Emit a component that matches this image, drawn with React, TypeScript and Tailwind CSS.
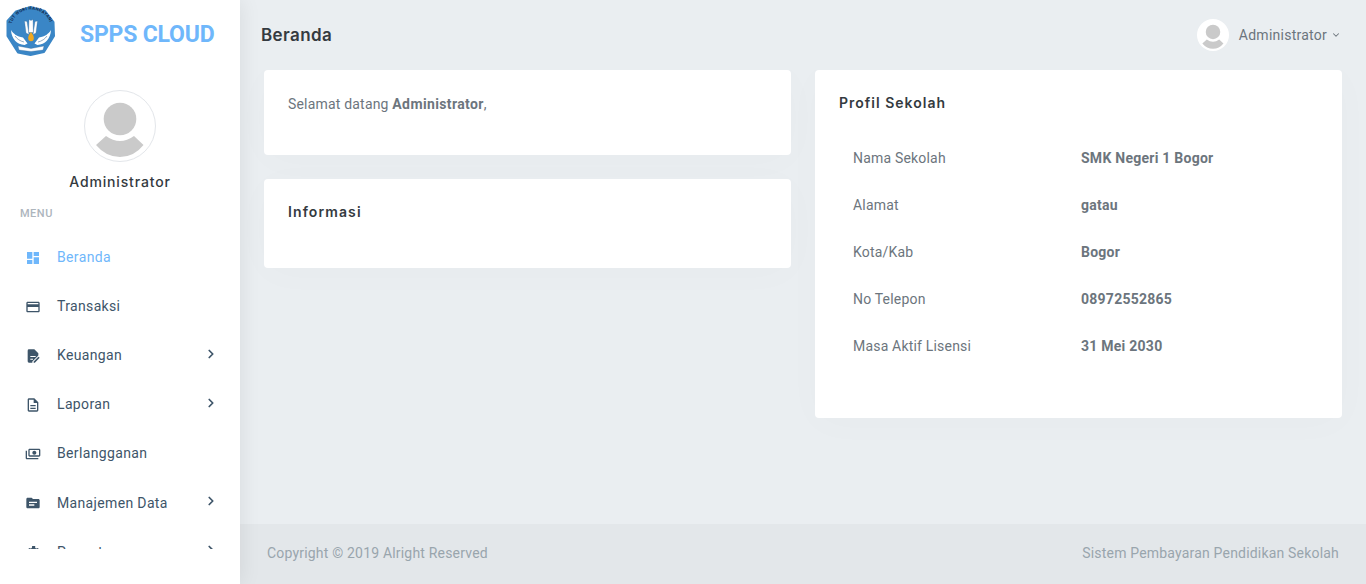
import { ChevronDown, ChevronRight } from "lucide-react";

const menuItems = [
  { label: "Beranda", icon: "M3 3h8v10H3zM3 15h8v6H3zM13 3h8v6h-8zM13 11h8v10h-8z", active: true },
  {
    label: "Transaksi",
    icon: "M20 4H4c-1.11 0-1.99.89-1.99 2L2 18c0 1.11.89 2 2 2h16c1.11 0 2-.89 2-2V6c0-1.11-.89-2-2-2zm0 14H4v-6h16v6zm0-10H4V6h16v2z",
  },
  {
    label: "Keuangan",
    icon: "M6 2h8l6 6v3.200l-9 9V22H6a2 2 0 0 1-2-2V4a2 2 0 0 1 2-2zM8 12h8v1.500H8zM8 16h4v1.500H8zM13 20.200V22h1.800l7.200-7.200-1.800-1.800z",
    more: true,
  },
  {
    label: "Laporan",
    icon: "M8 16h8v2H8zm0-4h8v2H8zm6-10H6c-1.100 0-2 .9-2 2v16c0 1.100.89 2 1.990 2H18c1.100 0 2-.9 2-2V8l-6-6zm4 18H6V4h7v5h5v11z",
    more: true,
  },
  {
    label: "Berlangganan",
    icon: "M5 14V6c0-1.100.9-2 2-2h14c1.100 0 2 .9 2 2v8c0 1.100-.9 2-2 2H7c-1.100 0-2-.9-2-2zm2 0h14V6H7v8zm7-7c1.660 0 3 1.340 3 3s-1.340 3-3 3-3-1.340-3-3 1.340-3 3-3zM1 7v11c0 1.100.9 2 2 2h17v-2H3V7H1z",
  },
  {
    label: "Manajemen Data",
    icon: "M20 6h-8l-2-2H4c-1.100 0-1.990.9-1.990 2L2 18c0 1.100.9 2 2 2h16c1.100 0 2-.9 2-2V8c0-1.100-.9-2-2-2zm-6 10H6v-2h8v2zm4-4H6v-2h12v2z",
    more: true,
  },
  {
    label: "Pengaturan",
    icon: "M19.400 13a7.500 7.500 0 0 0 0-2l2.100-1.600-2-3.500-2.500 1a7.300 7.300 0 0 0-1.700-1L15.300 3h-4.600l-.4 2.900a7.300 7.300 0 0 0-1.700 1l-2.500-1-2 3.500L6.200 11a7.500 7.500 0 0 0 0 2l-2.100 1.600 2 3.500 2.500-1a7.300 7.300 0 0 0 1.700 1l.4 2.900h4.600l.4-2.900a7.300 7.300 0 0 0 1.700-1l2.500 1 2-3.500zM13 15.500a3.500 3.500 0 1 1 0-7 3.500 3.500 0 0 1 0 7z",
    more: true,
  },
];

const schoolProfile = [
  ["Nama Sekolah", "SMK Negeri 1 Bogor"],
  ["Alamat", "gatau"],
  ["Kota/Kab", "Bogor"],
  ["No Telepon", "08972552865"],
  ["Masa Aktif Lisensi", "31 Mei 2030"],
];

const UserShape = ({ className }: { className: string }) => (
  <svg viewBox="0 0 72 72" className={className}>
    <circle cx="36" cy="29" r="16.300" fill="#cacaca" />
    <path d="M12 55 L22 46 Q36 56 50 46 L59.500 55 Q50 67 36 67 Q22 67 12 55z" fill="#cacaca" />
  </svg>
);

const Logo = () => (
  <svg viewBox="0 0 50 50" className="h-[50px] w-[50px]">
    <path
      d="M24.500 1 39 5 47.500 16 48 30 38 46 24.500 49 12 46.500 1.500 30 1.500 15 10 5.500z"
      fill="#3a86c6"
      stroke="#3a86c6"
      strokeWidth="2"
      strokeLinejoin="round"
    />
    <path id="logo-ring" d="M5 21C6 11 15 3.500 25 3.500S44 11 45 21" fill="none" />
    <text fontFamily="Roboto, sans-serif" fontSize="4.300" fontWeight="700" fill="#10294d" letterSpacing="0.300">
      <textPath href="#logo-ring" startOffset="3">TUT WURI HANDAYANI</textPath>
    </text>
    <path d="M18.500 15l2.500.5 2 13-3-1.500zM31.500 15l-2.500.5-2 13 3-1.500zM23 13.500l2 1 2-1 .4 13h-4.800z" fill="#ffffff" stroke="#2a5c8f" strokeWidth="0.300" />
    <path d="M5 24c2.500 4 6 6.500 12 7.500l4.500 6-3 1.500C11 38.500 5.500 33 5 24zM45 24c-2.500 4-6 6.500-12 7.500L28.500 37.500l3 1.500C39 38.500 44.500 33 45 24z" fill="#ffffff" />
    <path d="M9 30c2 3 5 5 9 6M41 30c-2 3-5 5-9 6" fill="none" stroke="#2a5c8f" strokeWidth="0.500" />
    <path d="M25 26c2.300 2.800 2.800 4.500 2.800 6a2.800 3.200 0 0 1-5.600 0c0-1.500.5-3.200 2.800-6z" fill="#f2a81e" />
    <path d="M12 40 25 42.500 38 40 37 44 25 45.500 13 44z" fill="#ffffff" stroke="#2a5c8f" strokeWidth="0.300" />
  </svg>
);

export default function App() {
  return (
    <div className="flex h-[584px] w-[1366px] overflow-hidden bg-[#eaeef1] font-['Roboto',sans-serif] text-[14px] tracking-[0.19px] text-[#6c757d]">
      <aside className="relative z-10 flex h-full w-[240px] shrink-0 flex-col bg-white shadow-[1px_0_20px_rgba(0,0,0,0.08)]">
        <div className="flex h-[70px] shrink-0 items-start pl-[6px] pt-[6px]">
          <Logo />
          <span className="ml-[24px] mt-[15px] text-[23px] leading-[28px] font-bold tracking-[-0.2px] text-[#6fb7fb]">
            SPPS CLOUD
          </span>
        </div>

        <div className="flex shrink-0 flex-col items-center pt-[20px]">
          <div className="h-[72px] w-[72px] rounded-full border border-[#e3e6ea] bg-white">
            <UserShape className="-m-px h-[72px] w-[72px]" />
          </div>
          <p className="mt-[11px] font-['Inter',sans-serif] text-[14px] leading-[17px] font-medium tracking-[0.85px] text-[#343a40]">
            Administrator
          </p>
        </div>

        <p className="mt-[17px] shrink-0 pl-[20px] text-[11px] leading-[13px] font-medium tracking-[0.5px] text-[#adb5bd]">
          MENU
        </p>

        <nav className="mt-[13px] h-[316px] shrink-0 overflow-hidden tracking-[0.35px]">
          {menuItems.map((item) => (
            <div key={item.label} className="flex h-[49.1px] items-center pl-[25px] pr-[22px]">
              <svg
                viewBox="0 0 24 24"
                fill="currentColor"
                className={`h-[16px] w-[16px] shrink-0 ${item.active ? "text-[#6fb7fb]" : "text-[#3e5569]"}`}
              >
                <path d={item.icon} fillRule="evenodd" />
              </svg>
              <span className={`ml-[16px] flex-1 ${item.active ? "text-[#6fb7fb]" : "text-[#3e5569]"}`}>{item.label}</span>
              {item.more && <ChevronRight className="-mt-[4px] h-[14px] w-[14px] text-[#3e5569]" strokeWidth={3} />}
            </div>
          ))}
        </nav>
      </aside>

      <div className="flex h-full min-w-0 flex-1 flex-col">
        <header className="relative z-[1] flex h-[70px] shrink-0 items-center justify-between bg-[#eaeef1] pl-[21px] pr-[25px]">
          <h1 className="font-['Inter',sans-serif] text-[17px] leading-[20px] font-semibold tracking-[0.4px] text-[#343a40]">
            Beranda
          </h1>
          <div className="flex items-center">
            <div className="h-[32px] w-[32px] rounded-full bg-white">
              <UserShape className="h-[32px] w-[32px]" />
            </div>
            <span className="ml-[10px] text-[14px] tracking-[0.25px] text-[#6c757d]">Administrator</span>
            <ChevronDown className="ml-[4px] h-[10px] w-[10px] text-[#6c757d]" strokeWidth={2.500} />
          </div>
        </header>

        <main className="grid min-h-0 flex-1 grid-cols-2 items-start gap-x-[24px] px-[24px]">
          <div className="flex flex-col gap-[24px]">
            <section className="h-[85px] rounded-[4px] bg-white px-[24px] pt-[24px] leading-[20px] shadow-[0_5px_40px_rgba(0,0,0,0.02)]">
              Selamat datang <b className="font-bold tracking-[0.38px]">Administrator</b>,
            </section>
            <section className="h-[89px] rounded-[4px] bg-white px-[24px] pt-[24px] shadow-[0_5px_40px_rgba(0,0,0,0.02)]">
              <h2 className="font-['Inter',sans-serif] text-[14px] leading-[17px] font-semibold tracking-[1.1px] text-[#343a40]">
                Informasi
              </h2>
            </section>
          </div>

          <section className="h-[348px] rounded-[4px] bg-white px-[24px] pt-[24px] shadow-[0_5px_40px_rgba(0,0,0,0.02)]">
            <h2 className="font-['Inter',sans-serif] text-[14px] leading-[17px] font-semibold tracking-[1px] text-[#343a40]">
              Profil Sekolah
            </h2>
            <table className="mt-[24px] w-full table-fixed">
              <tbody>
                {schoolProfile.map(([label, value]) => (
                  <tr key={label} className="h-[47px]">
                    <td className="w-[242px] pl-[14px]">{label}</td>
                    <td className="font-bold tracking-[0.25px]">{value}</td>
                  </tr>
                ))}
              </tbody>
            </table>
          </section>
        </main>

        <footer className="flex h-[60px] shrink-0 items-center justify-between bg-[#e3e7ea] px-[27px] pb-[2px] text-[#99a5ad]">
          <span>Copyright © 2019 Alright Reserved</span>
          <span>Sistem Pembayaran Pendidikan Sekolah</span>
        </footer>
      </div>
    </div>
  );
}
